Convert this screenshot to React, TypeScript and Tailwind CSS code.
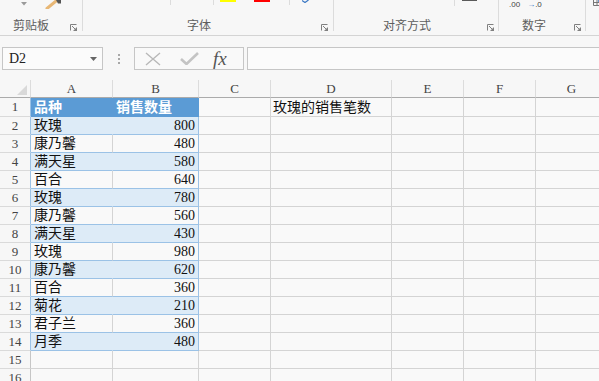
import React from 'react'

const cols = ['A', 'B', 'C', 'D', 'E', 'F', 'G']

const data: [string, number][] = [
  ['玫瑰', 800],
  ['康乃馨', 480],
  ['满天星', 580],
  ['百合', 640],
  ['玫瑰', 780],
  ['康乃馨', 560],
  ['满天星', 430],
  ['玫瑰', 980],
  ['康乃馨', 620],
  ['百合', 360],
  ['菊花', 210],
  ['君子兰', 360],
  ['月季', 480],
]

const cellFont = { fontFamily: "'Liberation Serif', 'Noto Sans CJK SC', serif" }
const uiFont = { fontFamily: "'Noto Sans CJK SC', sans-serif" }

function Launcher() {
  return (
    <svg width="7" height="7" viewBox="0 0 7 7" className="shrink-0">
      <path d="M0.5 6.5V0.5H6.5" stroke="#808080" fill="none" />
      <path d="M2 2L5.5 5.5" stroke="#808080" />
      <path d="M3 7H7V3Z" fill="#808080" />
    </svg>
  )
}

function Ribbon() {
  return (
    <div className="flex h-[36px] border-b border-[#d4d4d4] bg-[#f7f7f7] text-[12px] text-[#5e5e5e]" style={uiFont}>
      {/* 剪贴板 */}
      <div className="flex h-[31px] w-[83px] shrink-0 flex-col border-r border-[#dcdcdc]">
        <div className="flex h-[10px] items-start">
          <svg width="6" height="4" viewBox="0 0 6 4" className="ml-[21px] mt-[2px]">
            <path d="M0 0H6L3 3.5Z" fill="#9a9a9a" />
          </svg>
          <svg width="16" height="9" viewBox="0 0 16 9" className="ml-[18px]">
            <path d="M2 8.5L11 1" stroke="#e8b775" strokeWidth="3" strokeLinecap="round" />
            <path d="M11 0H16V3.5H13Z" fill="#555" />
          </svg>
        </div>
        <div className="flex flex-1 items-end">
          <span className="mb-[-2px] pl-[13px] leading-[17px]">剪贴板</span>
          <div className="ml-auto mr-[5px]">
            <Launcher />
          </div>
        </div>
      </div>

      {/* 字体 */}
      <div className="flex h-[31px] w-[251px] shrink-0 flex-col border-r border-[#dcdcdc]">
        <div className="flex h-[10px] items-start">
          <div className="ml-[87px] h-[5px] w-px bg-[#dcdcdc]" />
          <div className="ml-[42px] h-[5px] w-px bg-[#dcdcdc]" />
          <div className="ml-[6px] h-[2px] w-[16px] bg-[#ffff00]" />
          <div className="ml-[18px] h-[2px] w-[16px] bg-[#ff0000]" />
          <div className="ml-[19px] h-[5px] w-px bg-[#dcdcdc]" />
          <svg width="7" height="3" viewBox="0 0 7 3" className="ml-[12px]">
            <path d="M0 0.5L3 2.5L6.5 0" stroke="#3b78c4" strokeWidth="1.2" fill="none" />
          </svg>
        </div>
        <div className="flex flex-1 items-end">
          <span className="mb-[-2px] pl-[104px] leading-[17px]">字体</span>
          <div className="ml-auto mr-[5px]">
            <Launcher />
          </div>
        </div>
      </div>

      {/* 对齐方式 */}
      <div className="flex h-[31px] w-[165px] shrink-0 flex-col border-r border-[#dcdcdc]">
        <div className="flex h-[10px] items-start">
          <div className="ml-[120px] h-[6px] w-px bg-[#dcdcdc]" />
          <div className="ml-[7px] h-[1px] w-[15px] bg-[#5a5a5a]" />
        </div>
        <div className="flex flex-1 items-end">
          <span className="mb-[-2px] pl-[49px] leading-[17px]">对齐方式</span>
          <div className="ml-auto mr-[4px]">
            <Launcher />
          </div>
        </div>
      </div>

      {/* 数字 */}
      <div className="flex h-[31px] w-[87px] shrink-0 flex-col border-r border-[#dcdcdc]">
        <div className="flex h-[10px] items-start pl-[10px] text-[8px] leading-[9px] text-[#444]" style={{ fontFamily: "'Liberation Sans', sans-serif" }}>
          <span>.00</span>
          <span className="ml-[7px] font-bold text-[#3b78c4]">→</span>
          <span>.0</span>
        </div>
        <div className="flex flex-1 items-end">
          <span className="mb-[-2px] pl-[23px] leading-[17px]">数字</span>
          <div className="ml-auto mr-[4px]">
            <Launcher />
          </div>
        </div>
      </div>

      <div className="flex h-[31px] flex-1 items-start">
        <svg width="8" height="6" viewBox="0 0 8 6" className="ml-[7px]">
          <path d="M0.5 0V5.5H7.5M4 0V5.5M0.5 2.5H7.5" stroke="#777" fill="none" />
          <path d="M5 1H8" stroke="#3b78c4" strokeWidth="1.5" />
        </svg>
      </div>
    </div>
  )
}

function FormulaBar() {
  return (
    <div className="mt-[11px] flex h-[23px] items-stretch">
      <div className="ml-[2px] flex w-[101px] items-center border border-[#c6c6c6] bg-[#fbfbfb] pl-[6px] text-[14px] text-[#222]" style={cellFont}>
        <span>D2</span>
        <svg width="7" height="4" viewBox="0 0 7 4" className="ml-auto mr-[5px]">
          <path d="M0 0H7L3.5 4Z" fill="#666" />
        </svg>
      </div>
      <div className="ml-[15px] flex flex-col justify-center gap-[2px]">
        <div className="h-[2px] w-[2px] bg-[#a8a8a8]" />
        <div className="h-[2px] w-[2px] bg-[#a8a8a8]" />
        <div className="h-[2px] w-[2px] bg-[#a8a8a8]" />
      </div>
      <div className="ml-[14px] flex w-[110px] items-center border border-[#c6c6c6] bg-[#f9f9f9]">
        <svg width="16" height="14" viewBox="0 0 16 14" className="ml-[10px]">
          <path d="M1 1L15 13M15 1L1 13" stroke="#b8b8b8" strokeWidth="1.4" />
        </svg>
        <svg width="19" height="13" viewBox="0 0 19 13" className="ml-[19px]">
          <path d="M1 7L6.5 12L18 1" stroke="#c4c4c4" strokeWidth="2.6" fill="none" />
        </svg>
        <span className="ml-[14px] text-[19px] italic leading-none text-[#555]" style={{ fontFamily: "'Liberation Serif', serif" }}>
          fx
        </span>
      </div>
      <div className="ml-[3px] flex-1 border border-r-0 border-[#c6c6c6] bg-[#fbfbfb]" />
    </div>
  )
}

function Sheet() {
  const rowNums = Array.from({ length: 16 }, (_, i) => i + 1)
  return (
    <div className="mt-[10px] grid grid-cols-[31px_82px_86px_72px_121px_72px_72px_72px] text-[14px] text-[#111]" style={cellFont}>
      {/* column header */}
      <div className="flex h-[18px] items-end justify-end border-b border-r border-[#ababab] border-r-[#dcdcdc] pb-[2px] pr-[3px]">
        <svg width="10" height="10" viewBox="0 0 10 10">
          <path d="M10 0V10H0Z" fill="#d9d9d9" />
        </svg>
      </div>
      {cols.map((c) => (
        <div key={c} className="flex h-[18px] items-center justify-center border-b border-r border-[#ababab] border-r-[#dcdcdc] text-[13px] text-[#444]">
          {c}
        </div>
      ))}

      {rowNums.map((r) => {
        const h = r === 1 ? 'h-[19px]' : 'h-[18px]'
        const inTable = r >= 1 && r <= 14
        const item = r >= 2 && r <= 14 ? data[r - 2] : null
        const banded = r % 2 === 0
        const fill = banded ? 'bg-[#ddebf7]' : 'bg-[#f9f9f9]'
        return (
          <React.Fragment key={r}>
            <div
              className={`flex ${h} items-center justify-center border-b border-r border-[#dadada] text-[13px] text-[#444] ${
                inTable ? 'border-r-[#9bc2e6]' : 'border-r-[#c6c6c6]'
              }`}
            >
              {r}
            </div>
            {r === 1 ? (
              <>
                <div className={`flex ${h} items-center border-b border-r border-[#5b9bd5] bg-[#5b9bd5] pl-[3px] font-bold text-white`}>品种</div>
                <div className={`flex ${h} items-center border-b border-r border-[#5b9bd5] bg-[#5b9bd5] pl-[3px] font-bold text-white`}>销售数量</div>
              </>
            ) : item ? (
              <>
                <div
                  className={`flex ${h} items-center border-b border-r border-[#9bc2e6] ${fill} pl-[3px] ${
                    banded ? 'border-r-[#ddebf7]' : 'border-r-[#d4d4d4]'
                  }`}
                >
                  {item[0]}
                </div>
                <div className={`flex ${h} items-center justify-end border-b border-r border-[#9bc2e6] ${fill} pr-[3px]`}>{item[1]}</div>
              </>
            ) : (
              <>
                <div className={`${h} border-b border-r border-[#d4d4d4] bg-[#f9f9f9]`} />
                <div className={`${h} border-b border-r border-[#d4d4d4] bg-[#f9f9f9]`} />
              </>
            )}
            <div className={`${h} border-b border-r border-[#d4d4d4] bg-[#f9f9f9]`} />
            <div className={`flex ${h} items-center whitespace-nowrap border-b border-r border-[#d4d4d4] bg-[#f9f9f9] pl-[2px]`}>
              {r === 1 ? '玫瑰的销售笔数' : ''}
            </div>
            <div className={`${h} border-b border-r border-[#d4d4d4] bg-[#f9f9f9]`} />
            <div className={`${h} border-b border-r border-[#d4d4d4] bg-[#f9f9f9]`} />
            <div className={`${h} border-b border-r border-[#d4d4d4] bg-[#f9f9f9]`} />
          </React.Fragment>
        )
      })}
    </div>
  )
}

export default function App() {
  return (
    <div className="h-[381px] w-[599px] overflow-hidden bg-[#f7f7f7]">
      <Ribbon />
      <FormulaBar />
      <Sheet />
    </div>
  )
}
